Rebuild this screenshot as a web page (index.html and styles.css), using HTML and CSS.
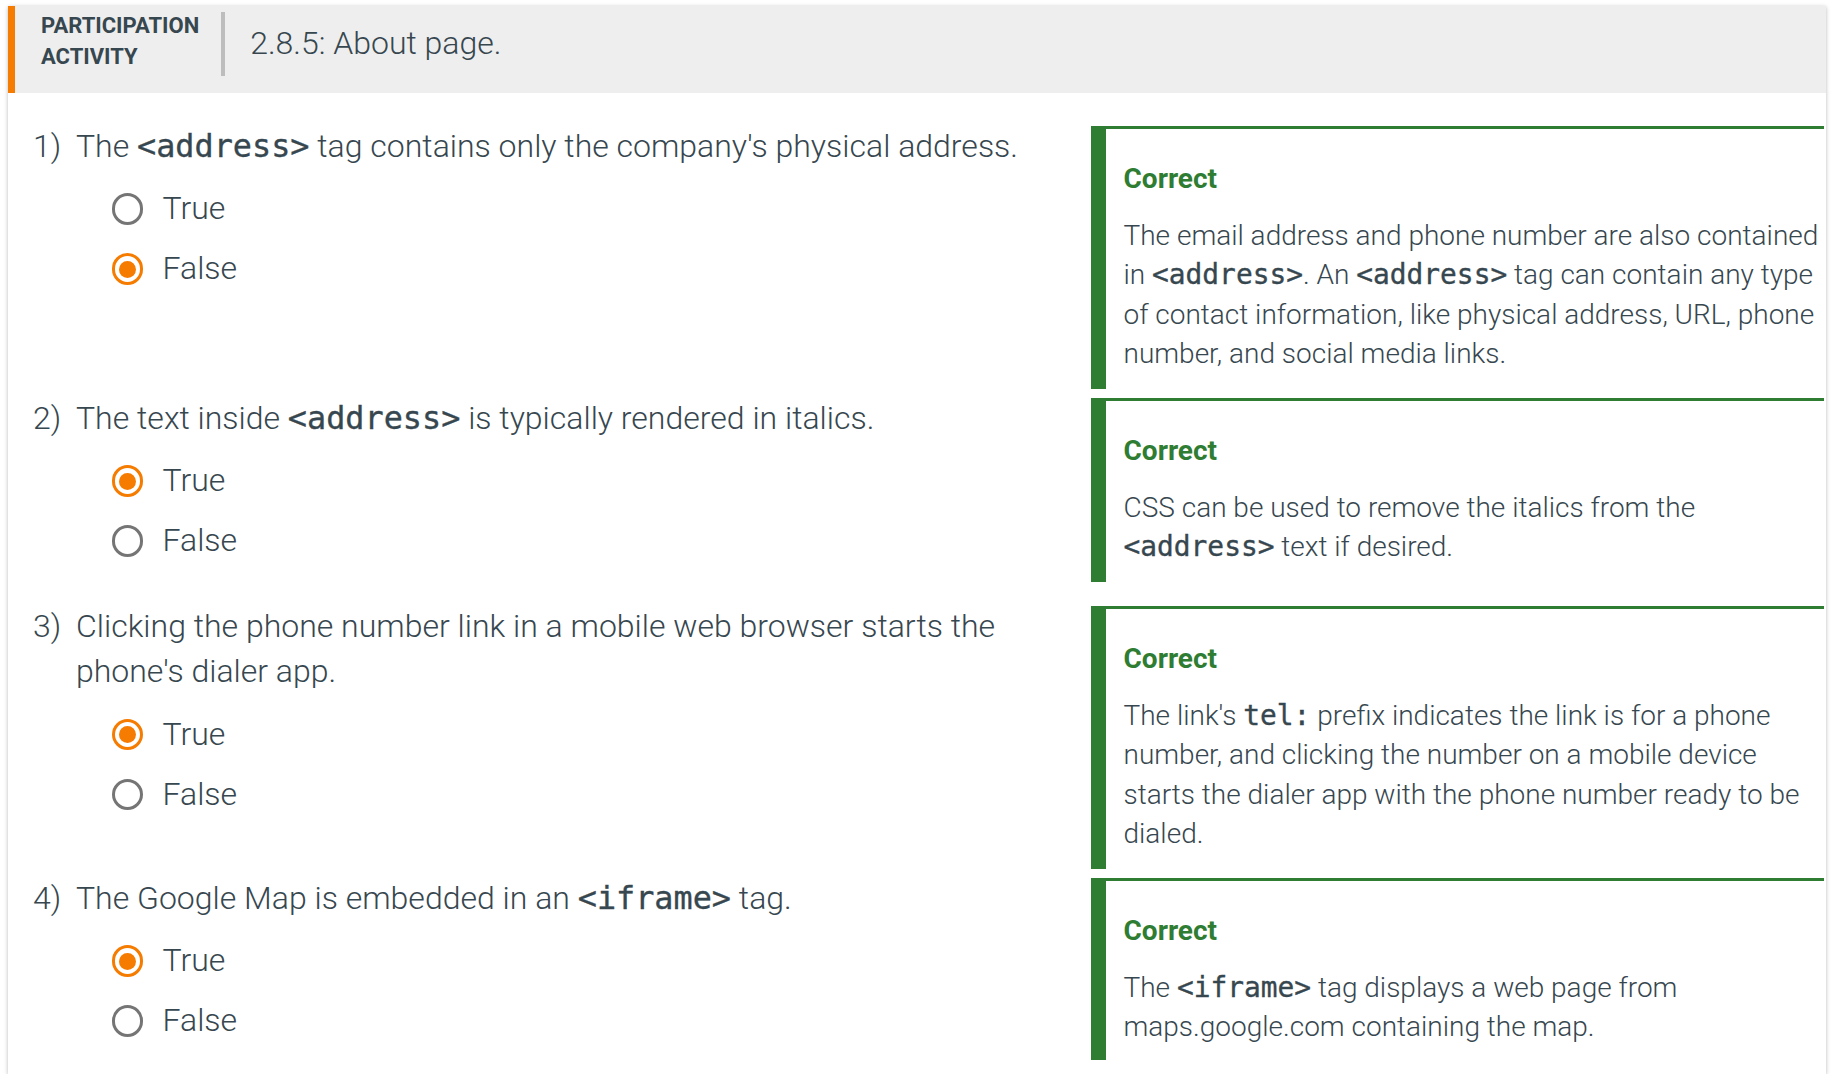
FILE: index.html
```html
<!DOCTYPE html>
<html lang="en">
<head>
<meta charset="utf-8">
<title>2.8.5: About page.</title>
<link rel="stylesheet" href="styles.css">
</head>
<body>
<div class="activity">
  <div class="activity-header">
    <div class="activity-label">PARTICIPATION<br>ACTIVITY</div>
    <div class="activity-divider"></div>
    <h2 class="activity-title">2.8.5: About page.</h2>
  </div>
  <div class="activity-body">

    <div class="question-row">
      <div class="question">
        <div class="question-text"><span class="question-num">1)</span><span class="question-stem">The <code>&lt;address&gt;</code> tag contains only the company's physical address.</span></div>
        <div class="options">
          <div class="option"><span class="radio"></span><span class="option-text">True</span></div>
          <div class="option"><span class="radio radio-checked"></span><span class="option-text">False</span></div>
        </div>
      </div>
      <div class="explanation">
        <div class="explanation-title">Correct</div>
        <div class="explanation-text">The email address and phone number are also contained in <code>&lt;address&gt;</code>. An <code>&lt;address&gt;</code> tag can contain any type of contact information, like physical address, URL, phone number, and social media links.</div>
      </div>
    </div>

    <div class="question-row">
      <div class="question">
        <div class="question-text"><span class="question-num">2)</span><span class="question-stem">The text inside <code>&lt;address&gt;</code> is typically rendered in italics.</span></div>
        <div class="options">
          <div class="option"><span class="radio radio-checked"></span><span class="option-text">True</span></div>
          <div class="option"><span class="radio"></span><span class="option-text">False</span></div>
        </div>
      </div>
      <div class="explanation">
        <div class="explanation-title">Correct</div>
        <div class="explanation-text">CSS can be used to remove the italics from the <code>&lt;address&gt;</code> text if desired.</div>
      </div>
    </div>

    <div class="question-row">
      <div class="question">
        <div class="question-text"><span class="question-num">3)</span><span class="question-stem">Clicking the phone number link in a mobile web browser starts the phone's dialer app.</span></div>
        <div class="options">
          <div class="option"><span class="radio radio-checked"></span><span class="option-text">True</span></div>
          <div class="option"><span class="radio"></span><span class="option-text">False</span></div>
        </div>
      </div>
      <div class="explanation">
        <div class="explanation-title">Correct</div>
        <div class="explanation-text">The link's <code>tel:</code> prefix indicates the link is for a phone number, and clicking the number on a mobile device starts the dialer app with the phone number ready to be dialed.</div>
      </div>
    </div>

    <div class="question-row">
      <div class="question">
        <div class="question-text"><span class="question-num">4)</span><span class="question-stem">The Google Map is embedded in an <code>&lt;iframe&gt;</code> tag.</span></div>
        <div class="options">
          <div class="option"><span class="radio radio-checked"></span><span class="option-text">True</span></div>
          <div class="option"><span class="radio"></span><span class="option-text">False</span></div>
        </div>
      </div>
      <div class="explanation">
        <div class="explanation-title">Correct</div>
        <div class="explanation-text">The <code>&lt;iframe&gt;</code> tag displays a web page from maps.google.com containing the map.</div>
      </div>
    </div>

  </div>
</div>
</body>
</html>
```
FILE: styles.css
```css
* { box-sizing: border-box; }

html, body {
  margin: 0;
  padding: 0;
  background: #ffffff;
}

body {
  font-family: Roboto, "Noto Sans", "Liberation Sans", sans-serif;
  color: #37474f;
}

.activity {
  margin: 6px 8px 0 8px;
  background: #ffffff;
  box-shadow: 0 1px 4px rgba(0, 0, 0, 0.28);
}

/* Header */
.activity-header {
  display: flex;
  align-items: flex-start;
  background: #eeeeee;
  border-left: 7px solid #f57c00;
  height: 87px;
  padding: 5px 0 0 26px;
}

.activity-label {
  font-size: 22px;
  line-height: 30.6px;
  font-weight: 700;
  color: #37474f;
}

.activity-divider {
  width: 4px;
  height: 64px;
  margin: 1px 25px 0 22px;
  background: #bdbdbd;
}

.activity-title {
  margin: 0;
  margin-top: 14px;
  font-size: 32px;
  font-weight: 300;
  line-height: 37px;
  color: #37474f;
}

/* Body */
.activity-body {
  display: flex;
  flex-direction: column;
  gap: 7px;
  padding: 30.5px 2px 0 25px;
}

.question-row {
  display: grid;
  grid-template-columns: 1fr 733px;
  column-gap: 21px;
  align-items: start;
}

.question {
  padding-bottom: 25.5px;
}

.question-row:last-child .question {
  padding-bottom: 22.5px;
}

.question-text {
  display: flex;
  font-size: 32px;
  line-height: 45.5px;
  font-weight: 300;
}

.question-num {
  flex: 0 0 43px;
}

.question-stem {
  flex: 1 1 auto;
}

code {
  font-family: "DejaVu Sans Mono", "Liberation Mono", monospace;
  font-weight: 400;
  font-size: 0.995em;
  color: #37474f;
  -webkit-text-stroke: 0.35px #37474f;
}

.options {
  margin-top: 10px;
  margin-left: 43px;
  padding-left: 35.5px;
}

.option {
  display: flex;
  align-items: center;
  height: 60px;
}

.radio {
  flex: 0 0 31.5px;
  width: 31.5px;
  height: 31.5px;
  border: 3.5px solid #757575;
  border-radius: 50%;
  display: flex;
  align-items: center;
  justify-content: center;
  margin-right: 19.5px;
}

.radio-checked {
  border-color: #f57c00;
}

.radio-checked::after {
  content: "";
  width: 17px;
  height: 17px;
  border-radius: 50%;
  background: #f57c00;
}

.option-text {
  font-size: 32px;
  line-height: 45.5px;
  font-weight: 300;
}

/* Explanation */
.explanation {
  margin-top: 2.5px;
  border-top: 3.5px solid #2e7d32;
  border-left: 15.5px solid #2e7d32;
  padding: 30px 0 15.5px 17.5px;
}

.question-row:last-child .explanation {
  padding-bottom: 13px;
}

.explanation-title {
  font-size: 28px;
  line-height: 39.2px;
  font-weight: 700;
  color: #2e7d32;
  margin-bottom: 18px;
}

.explanation-text {
  font-size: 28px;
  line-height: 39.2px;
  font-weight: 300;
}
```
